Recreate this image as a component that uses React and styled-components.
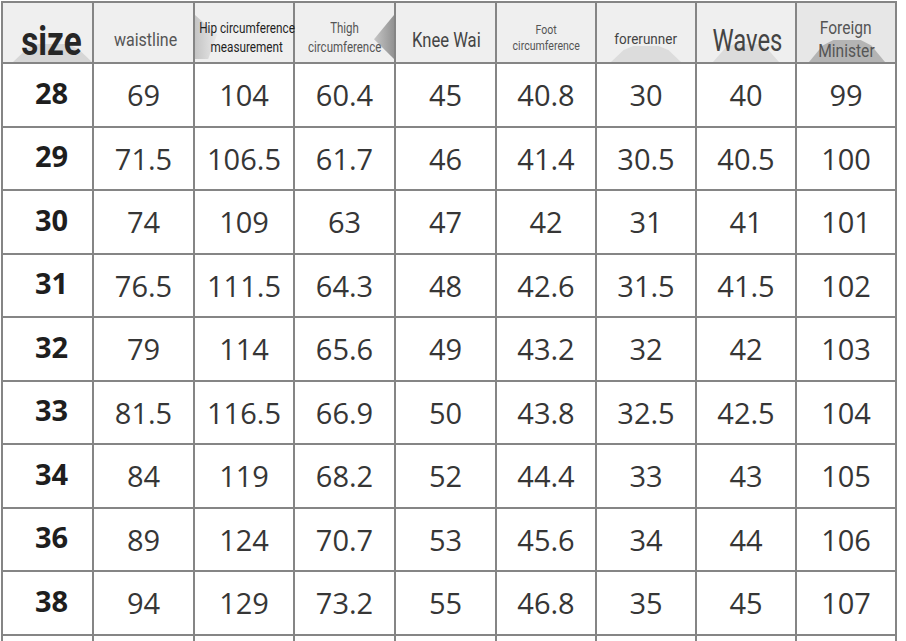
import React from "react";
import styled, { createGlobalStyle, css } from "styled-components";

const Global = createGlobalStyle`
  html, body { margin: 0; padding: 0; background: #ffffff; }
  body { overflow: hidden; width: 906px; height: 641px; }
`;

const Page = styled.div`
  width: 906px;
  height: 641px;
  overflow: hidden;
  background: #fff;
  padding: 1px 0 0 1px;
  box-sizing: border-box;
`;

const Grid = styled.div`
  display: inline-grid;
  grid-template-columns: 89px 99px 98px 99px 99px 98px 98px 98px 98px;
  grid-template-rows: 59px repeat(10, 61.5px);
  gap: 2px;
  padding: 2px;
  background: #858585;
`;

const HeadCell = styled.div`
  position: relative;
  overflow: visible;
  background: ${(p) => p.$bg || "#efefef"};
  display: flex;
  flex-direction: column;
  align-items: center;
  justify-content: center;
  padding-top: ${(p) => p.$pt ?? 14}px;
  padding-left: ${(p) => p.$pl ?? 0}px;
  box-sizing: border-box;
  font-family: "Roboto", "Liberation Sans", sans-serif;
  font-size: ${(p) => p.$size}px;
  font-weight: ${(p) => (p.$bold ? 700 : 400)};
  line-height: ${(p) => p.$lh || 1.3};
  color: ${(p) => p.$color || "#555"};
  text-align: center;
  white-space: nowrap;
  z-index: ${(p) => (p.$over ? 2 : 1)};

  ${(p) =>
    p.$shade === "mound" &&
    css`
      &::before {
        content: "";
        position: absolute;
        left: ${p.$sl ?? 12}px;
        right: ${p.$sr ?? 12}px;
        bottom: 0;
        height: ${p.$sh ?? 16}px;
        background: ${p.$sc || "#d6d6d6"};
        clip-path: polygon(0 100%, 18% 25%, 32% 0, 68% 0, 82% 25%, 100% 100%);
        z-index: -1;
      }
    `}
  ${(p) =>
    p.$shade === "wedge" &&
    css`
      &::before {
        content: "";
        position: absolute;
        left: 0;
        top: 12px;
        width: 22px;
        height: 44px;
        background: linear-gradient(90deg, #c4c4c4, #e8e8e8);
        clip-path: polygon(0 0, 100% 45%, 60% 100%, 0 100%);
        z-index: -1;
      }
    `}
  ${(p) =>
    p.$shade === "tri" &&
    css`
      &::before {
        content: "";
        position: absolute;
        right: 0;
        top: 12px;
        width: 20px;
        height: 44px;
        background: linear-gradient(90deg, #c6c6c6, #929292);
        clip-path: polygon(100% 0, 0 55%, 100% 100%);
        z-index: -1;
      }
    `}
`;

const Line = styled.span`
  display: block;
  transform: scaleX(${(p) => p.$sx});
`;

const Cell = styled.div`
  background: #fff;
  display: flex;
  align-items: center;
  justify-content: center;
  font-family: "Open Sans", "Noto Sans", sans-serif;
  font-size: 29px;
  color: #363636;
  box-sizing: border-box;
`;

const SizeCell = styled(Cell)`
  font-weight: 700;
  color: #1e1e1e;
  padding-left: 8px;
  padding-bottom: 5px;
`;

const headers = [
  { lines: ["size"], size: 40, bold: true, color: "#262626", sx: 0.83, shade: "mound", sl: 10, sr: 0, sh: 18, sc: "#d6d6d6", pt: 18, pl: 8, lh: 1 },
  { lines: ["waistline"], size: 18, sx: 0.89, color: "#555", pt: 14, pl: 4 },
  { lines: ["Hip circumference", "measurement"], size: 14.5, sx: 0.81, color: "#1f1f1f", shade: "wedge", pt: 12, pl: 6, over: true },
  { lines: ["Thigh", "circumference"], size: 14, sx: 0.82, color: "#555", shade: "tri", pt: 10 },
  { lines: ["Knee Wai"], size: 20, sx: 0.83, color: "#444", pt: 14, pl: 2 },
  { lines: ["Foot", "circumference"], size: 12, sx: 0.88, color: "#555", pt: 11, lh: 1.35 },
  { lines: ["forerunner"], size: 14.5, sx: 0.93, color: "#444", shade: "mound", sl: 14, sr: 14, sh: 16, sc: "#dcdcdc", pt: 15 },
  { lines: ["Waves"], size: 31, sx: 0.77, color: "#444", shade: "mound", sl: 16, sr: 16, sh: 18, sc: "#dcdcdc", pt: 16, pl: 2, lh: 1 },
  { lines: ["Foreign", "Minister"], size: 19, sx: 0.82, color: "#555", bg: "#e7e7e7", shade: "mound", sl: 12, sr: 10, sh: 22, sc: "#b4b4b4", pt: 14, lh: 1.2 },
];

const rows = [
  [28, 69, 104, 60.4, 45, 40.8, 30, 40, 99],
  [29, 71.5, 106.5, 61.7, 46, 41.4, 30.5, 40.5, 100],
  [30, 74, 109, 63, 47, 42, 31, 41, 101],
  [31, 76.5, 111.5, 64.3, 48, 42.6, 31.5, 41.5, 102],
  [32, 79, 114, 65.6, 49, 43.2, 32, 42, 103],
  [33, 81.5, 116.5, 66.9, 50, 43.8, 32.5, 42.5, 104],
  [34, 84, 119, 68.2, 52, 44.4, 33, 43, 105],
  [36, 89, 124, 70.7, 53, 45.6, 34, 44, 106],
  [38, 94, 129, 73.2, 55, 46.8, 35, 45, 107],
  ["", "", "", "", "", "", "", "", ""],
];

export default function App() {
  return (
    <Page>
      <Global />
      <Grid>
        {headers.map((h, i) => (
          <HeadCell
            key={i}
            $size={h.size}
            $bold={h.bold}
            $color={h.color}
            $bg={h.bg}
            $shade={h.shade}
            $sl={h.sl}
            $sr={h.sr}
            $sh={h.sh}
            $sc={h.sc}
            $pt={h.pt}
            $pl={h.pl}
            $lh={h.lh}
            $over={h.over}
          >
            {h.lines.map((l) => (
              <Line key={l} $sx={h.sx}>
                {l}
              </Line>
            ))}
          </HeadCell>
        ))}
        {rows.map((r, ri) =>
          r.map((v, ci) =>
            ci === 0 ? (
              <SizeCell key={`${ri}-${ci}`}>{v}</SizeCell>
            ) : (
              <Cell key={`${ri}-${ci}`}>{v}</Cell>
            )
          )
        )}
      </Grid>
    </Page>
  );
}
